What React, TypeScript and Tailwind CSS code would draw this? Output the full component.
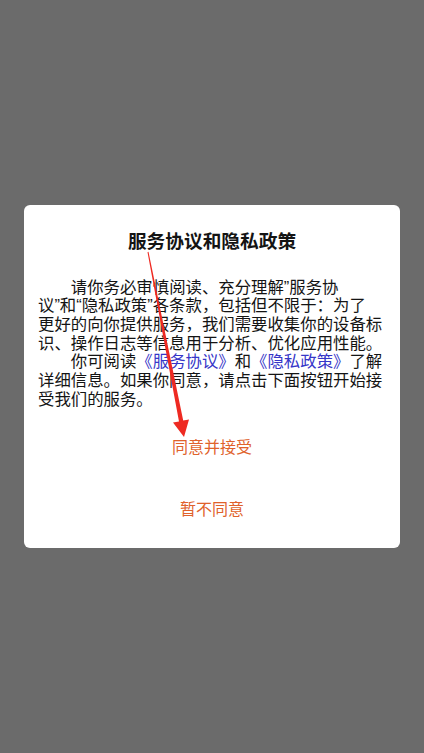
import React from 'react';

const linkCls = "text-[#3636c8]";

function Arrow() {
  // red annotation arrow drawn over the dialog
  return (
    <svg
      className="absolute left-0 top-0 pointer-events-none"
      width={424}
      height={753}
      viewBox="0 0 424 753"
    >
      <polygon
        points="147.5,252.2 148.5,251.8 183.2,420.6 189,419.4 184,437 173,422.6 179,421.4"
        fill="#ee2a22"
      />
    </svg>
  );
}

export default function App() {
  return (
    <div className="relative w-full min-h-[753px] bg-[#6b6b6b] flex justify-center items-start pt-[205px] font-['Liberation_Sans','Noto_Sans_CJK_SC',sans-serif]">
      <div className="w-[376px] bg-white rounded-[6px] pt-[25px] pb-[18.5px]">
        <h1 className="text-center text-[18.7px] leading-[24px] font-bold text-[#141414]">
          服务协议和隐私政策
        </h1>

        <div className="mt-[23.6px] px-[14px] text-[16.4px] leading-[18.7px] text-[#141414] whitespace-nowrap">
          <p className="indent-[2em]">
            请你务必审慎阅读、充分理解”服务协
            <br />
            议”和“隐私政策”各条款，包括但不限于：为了
            <br />
            更好的向你提供服务，我们需要收集你的设备标
            <br />
            识、操作日志等信息用于分析、优化应用性能。
          </p>
          <p className="indent-[2em]">
            你可阅读<span className={linkCls}>《服务协议》</span>和
            <span className={linkCls}>《隐私政策》</span>了解
            <br />
            详细信息。如果你同意，请点击下面按钮开始接
            <br />
            受我们的服务。
          </p>
        </div>

        <div className="mt-[19.5px] flex flex-col gap-[21.5px]">
          <button className="h-[40px] w-full text-[16px] text-[#e0622b]">同意并接受</button>
          <button className="h-[40px] w-full text-[16px] text-[#e0622b]">暂不同意</button>
        </div>
      </div>
      <Arrow />
    </div>
  );
}
